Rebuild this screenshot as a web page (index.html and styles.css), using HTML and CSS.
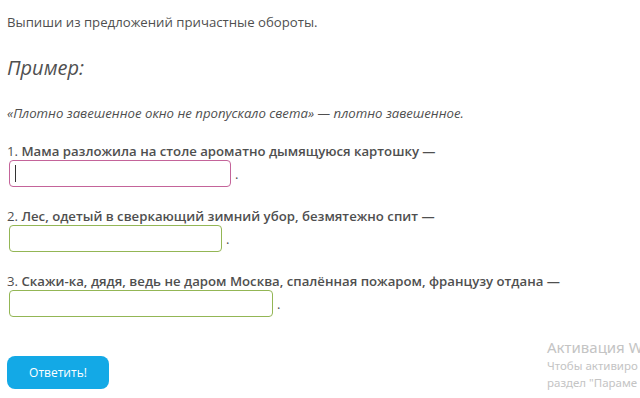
FILE: index.html
```html
<!DOCTYPE html>
<html lang="ru">
<head>
<meta charset="utf-8">
<link rel="stylesheet" href="styles.css">
</head>
<body>
<div class="page">
  <p class="task">Выпиши из предложений причастные обороты.</p>
  <h2 class="example-title">Пример:</h2>
  <p class="example">«Плотно завешенное окно не пропускало света» — плотно завешенное.</p>

  <div class="item">
    <p class="q"><span class="num">1.</span> Мама разложила на столе ароматно дымящуюся картошку —</p>
    <div class="answer"><span class="field field-active w1"><span class="caret"></span></span><span class="dot">.</span></div>
  </div>

  <div class="item">
    <p class="q"><span class="num">2.</span> Лес, одетый в сверкающий зимний убор, безмятежно спит —</p>
    <div class="answer"><span class="field w2"></span><span class="dot">.</span></div>
  </div>

  <div class="item">
    <p class="q"><span class="num">3.</span> Скажи-ка, дядя, ведь не даром Москва, спалённая пожаром, французу отдана —</p>
    <div class="answer"><span class="field w3"></span><span class="dot">.</span></div>
  </div>

  <button class="submit">Ответить!</button>
</div>
<div class="watermark">
  <div class="wm-title">Активация W</div>
  <div class="wm-text">Чтобы активиро</div>
  <div class="wm-text">раздел "Параме</div>
</div>
</body>
</html>
```

FILE: styles.css
```css
html, body {
  margin: 0;
  padding: 0;
  background: #ffffff;
  width: 640px;
  height: 398px;
  overflow: hidden;
}
body {
  font-family: "Open Sans", "Noto Sans", sans-serif;
  color: #4f4f4f;
  position: relative;
}
.page {
  padding: 13px 0 0 7px;
}
.task {
  margin: 0;
  font-size: 13.2px;
  line-height: 18px;
}
.example-title {
  margin: 24px 0 0 0;
  font-size: 20px;
  line-height: 26px;
  font-style: italic;
  font-weight: 400;
}
.example {
  margin: 24px 0 0 0;
  font-size: 13.2px;
  line-height: 16px;
  font-style: italic;
}
.item {
  margin-top: 21px;
}
.item + .item {
  margin-top: 20px;
}
.q {
  margin: 0;
  font-size: 13.2px;
  line-height: 18px;
  font-weight: 600;
}
.num {
  font-weight: 400;
}
.answer {
  display: flex;
  align-items: flex-end;
  margin: 0 0 0 2px;
}
.field {
  display: block;
  height: 25px;
  border: 1.5px solid #93b655;
  border-radius: 4px;
  background: #fff;
  position: relative;
}
.field-active {
  border-color: #c4649a;
}
.w1 { width: 220px; }
.w2 { width: 211px; }
.w3 { width: 262px; }
.caret {
  position: absolute;
  left: 5px;
  top: 4px;
  width: 1px;
  height: 17px;
  background: #333;
}
.dot {
  font-size: 13px;
  line-height: 18px;
  margin-left: 4px;
  margin-bottom: 4px;
}
.submit {
  display: block;
  margin-top: 39px;
  width: 102px;
  height: 33px;
  border: none;
  border-radius: 8px;
  background: #13a9e6;
  color: #ffffff;
  font-family: "Open Sans", "Noto Sans", sans-serif;
  font-size: 12px;
  padding: 0;
}
.watermark {
  position: absolute;
  left: 547px;
  top: 337px;
  white-space: nowrap;
  color: #c4c4c4;
  font-family: "Noto Sans", "Open Sans", sans-serif;
}
.wm-title {
  font-size: 15px;
  line-height: 20px;
}
.wm-text {
  font-size: 11.5px;
  line-height: 17px;
}
```
